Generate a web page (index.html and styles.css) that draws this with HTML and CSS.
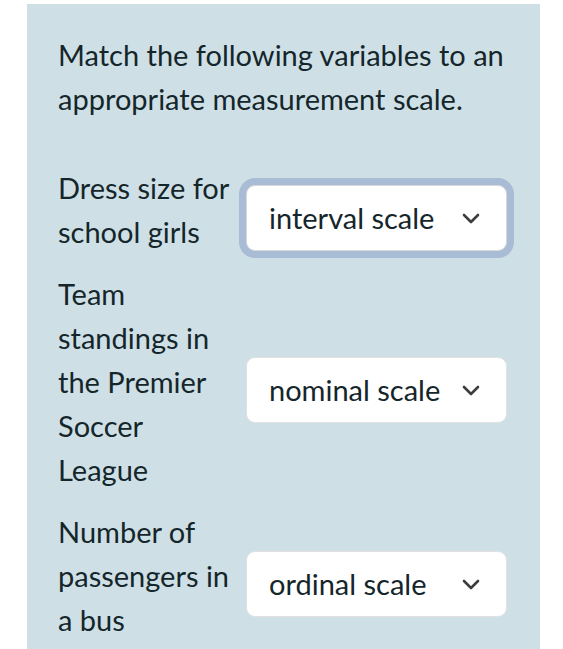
FILE: index.html
```html
<!DOCTYPE html>
<html lang="en">
<head>
<meta charset="utf-8">
<title>Match variables</title>
<link rel="stylesheet" href="styles.css">
</head>
<body>
<div class="panel">
  <p class="title">Match the following variables to an appropriate measurement scale.</p>
  <div class="rows">
    <div class="label">Dress size for school girls</div>
    <div class="select focused"><span>interval scale</span><svg class="chev" width="18" height="11" viewBox="0 0 18 11"><path d="M2 2 L9 9 L16 2" fill="none" stroke="#3d3d3d" stroke-width="2.6" stroke-linecap="round" stroke-linejoin="round"/></svg></div>
    <div class="label">Team standings in the Premier Soccer League</div>
    <div class="select"><span>nominal scale</span><svg class="chev" width="18" height="11" viewBox="0 0 18 11"><path d="M2 2 L9 9 L16 2" fill="none" stroke="#3d3d3d" stroke-width="2.6" stroke-linecap="round" stroke-linejoin="round"/></svg></div>
    <div class="label">Number of passengers in a bus</div>
    <div class="select"><span>ordinal scale</span><svg class="chev" width="18" height="11" viewBox="0 0 18 11"><path d="M2 2 L9 9 L16 2" fill="none" stroke="#3d3d3d" stroke-width="2.6" stroke-linecap="round" stroke-linejoin="round"/></svg></div>
  </div>
</div>
</body>
</html>
```
FILE: styles.css
```css
html, body {
  margin: 0;
  padding: 0;
  background: #ffffff;
}
body {
  font-family: Lato, "Liberation Sans", sans-serif;
  color: #15262b;
  font-size: 29px;
  line-height: 44px;
}
.panel {
  margin: 4px 23px 0 27px;
  background: #cee0e6;
  padding: 29px 33px 20px 31px;
  min-height: 700px;
}
.title {
  margin: 0 0 45px 0;
}
.rows {
  display: grid;
  grid-template-columns: 174px 261px;
  column-gap: 14px;
  row-gap: 18px;
}
.label {
  align-self: start;
}
.select {
  align-self: center;
  margin-top: 16px;
  height: 66px;
  box-sizing: border-box;
  background: #ffffff;
  border: 1px solid #e1e1e1;
  border-radius: 9px;
  display: flex;
  align-items: center;
  justify-content: space-between;
  padding: 0 26px 0 22px;
}
.select.focused {
  box-shadow: 0 0 0 7px #a9bcd5;
  border-color: #d8d8d8;
}
.chev {
  display: block;
  flex: none;
}
```
